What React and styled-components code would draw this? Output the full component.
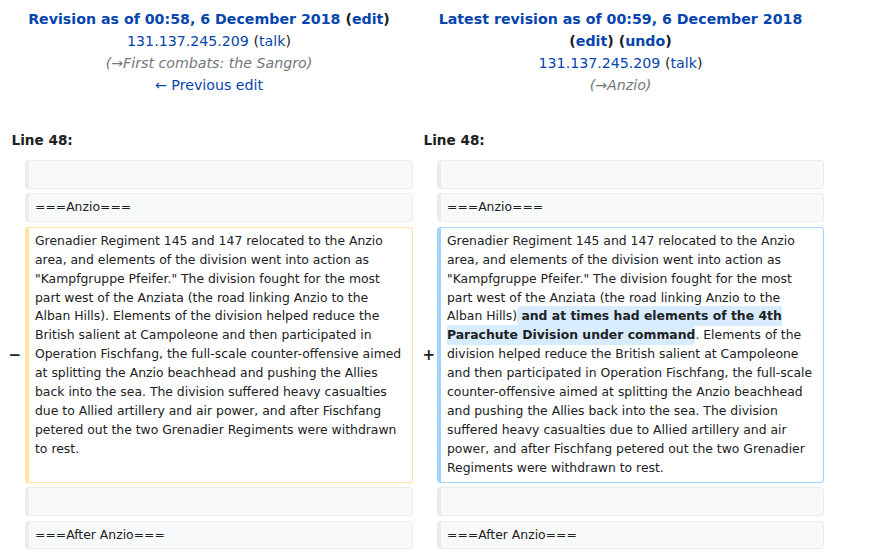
import styled, { createGlobalStyle } from 'styled-components';

const GlobalStyle = createGlobalStyle`
  body {
    margin: 0;
    background: #fff;
    color: #202122;
    font-family: "DejaVu Sans", sans-serif;
  }
`;

const Page = styled.div`
  padding: 8px 0 0 5px;
  font-size: 14.2px;
`;

const DiffTable = styled.div`
  display: grid;
  grid-template-columns: 16px 388px 16px 387px;
  column-gap: 4px;
  row-gap: 4.5px;
`;

const Title = styled.div`
  grid-column: span 2;
  text-align: center;
  line-height: 22px;
  margin-bottom: 28px;
`;

const Heading = styled.strong`
  display: block;
  font-weight: bold;
`;

const Link = styled.a`
  color: #0645ad;
  text-decoration: none;
`;

const Summary = styled.div`
  color: #72777d;
  font-style: italic;
`;

const LineNo = styled.div`
  grid-column: span 2;
  font-size: 13.6px;
  font-weight: bold;
  line-height: 22px;
  padding: 0 0 5px 6.5px;
`;

const Marker = styled.div`
  display: flex;
  align-items: center;
  justify-content: flex-end;
  margin-right: ${p => p.$shift || 0}px;
  font-weight: bold;
  font-size: 15px;
  line-height: 1.2;
`;

const Cell = styled.div`
  font-size: 12.4px;
  line-height: 18.9px;
  padding: 4px 6px;
  border: 1px solid ${p => p.$tone || '#eaecf0'};
  border-left-width: 4px;
  border-radius: 3.5px;
  background: ${p => (p.$tone ? '#fff' : '#f8f9fa')};
  word-wrap: break-word;
`;

const Change = styled.span`
  font-weight: bold;
  background: #d8ecff;
  border-radius: 0.33em;
  padding: 0.19em 0;
`;

const Muted = styled.span`
  color: #202122;
`;

const Context = ({ children }) => (
  <>
    <Marker />
    <Cell>{children || <br />}</Cell>
  </>
);

const OLD_TEXT =
  'Grenadier Regiment 145 and 147 relocated to the Anzio area, and elements of the division went into action as "Kampfgruppe Pfeifer." The division fought for the most part west of the Anziata (the road linking Anzio to the Alban Hills). Elements of the division helped reduce the British salient at Campoleone and then participated in Operation Fischfang, the full-scale counter-offensive aimed at splitting the Anzio beachhead and pushing the Allies back into the sea. The division suffered heavy casualties due to Allied artillery and air power, and after Fischfang petered out the two Grenadier Regiments were withdrawn to rest.';

const NEW_HEAD =
  'Grenadier Regiment 145 and 147 relocated to the Anzio area, and elements of the division went into action as "Kampfgruppe Pfeifer." The division fought for the most part west of the Anziata (the road linking Anzio to the Alban Hills)';

const NEW_TAIL =
  '. Elements of the division helped reduce the British salient at Campoleone and then participated in Operation Fischfang, the full-scale counter-offensive aimed at splitting the Anzio beachhead and pushing the Allies back into the sea. The division suffered heavy casualties due to Allied artillery and air power, and after Fischfang petered out the two Grenadier Regiments were withdrawn to rest.';

const App = () => (
  <Page>
    <GlobalStyle />
    <DiffTable>
      <Title>
        <Heading>
          <Link href="#">Revision as of 00:58, 6 December 2018</Link> (<Link href="#">edit</Link>)
        </Heading>
        <div>
          <Link href="#">131.137.245.209</Link> <Muted>(<Link href="#">talk</Link>)</Muted>
        </div>
        <Summary>(→First combats: the Sangro)</Summary>
        <div>
          <Link href="#">← Previous edit</Link>
        </div>
      </Title>
      <Title>
        <Heading>
          <Link href="#">Latest revision as of 00:59, 6 December 2018</Link> (<Link href="#">edit</Link>) (<Link href="#">undo</Link>)
        </Heading>
        <div>
          <Link href="#">131.137.245.209</Link> <Muted>(<Link href="#">talk</Link>)</Muted>
        </div>
        <Summary>(→Anzio)</Summary>
      </Title>

      <LineNo>Line 48:</LineNo>
      <LineNo>Line 48:</LineNo>

      <Context />
      <Context />

      <Context>===Anzio===</Context>
      <Context>===Anzio===</Context>

      <Marker>−</Marker>
      <Cell $tone="#ffe49c">{OLD_TEXT}</Cell>
      <Marker $shift={-2}>+</Marker>
      <Cell $tone="#a3d3ff">
        {NEW_HEAD}
        <Change> and at times had elements of the 4th Parachute Division under command</Change>
        {NEW_TAIL}
      </Cell>

      <Context />
      <Context />

      <Context>===After Anzio===</Context>
      <Context>===After Anzio===</Context>
    </DiffTable>
  </Page>
);

export default App;
